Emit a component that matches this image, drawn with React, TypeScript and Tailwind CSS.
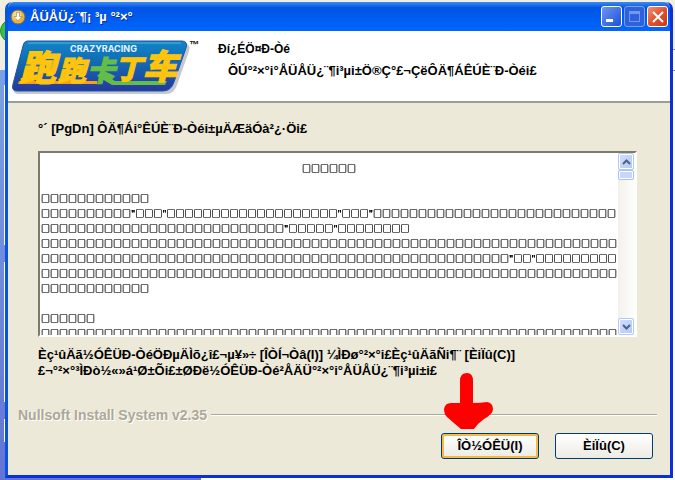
import React from "react";

const box = (count: number) => "□".repeat(count);

const licenseText = [
  "\u3000".repeat(29) + box(6),
  "",
  box(12),
  `${box(10)}"${box(3)}"${box(19)}"${box(3)}"${box(27)}`,
  `${box(27)}"${box(5)}"${box(8)}`,
  box(64),
  `${box(52)}"${box(2)}"${box(9)}`,
  box(64),
  box(12),
  "",
  box(6),
  box(64),
].join("\n");

function Backdrop() {
  return (
    <div className="absolute inset-0 -z-10 overflow-hidden bg-[#f0ede1]">
      <div className="absolute left-0 top-[19px] h-6 w-6 rounded-full border border-[#2b8a2b] bg-[#3cc03c]" />
      <div className="absolute bottom-0 left-0 top-[70px] w-[201px] bg-linear-to-b from-[#7d9fe4] to-[#6474d4]" />
      <div className="absolute left-1 top-[85px] h-[160px] w-px bg-white" />
      <div className="absolute left-1 top-[262px] h-[140px] w-px bg-white" />
      <div className="absolute left-1 top-[419px] h-[23px] w-px bg-white" />
      <div className="absolute bottom-0 left-[201px] right-0 top-[49px] border-t border-[#8c8c9c] bg-white" />
      <div className="absolute right-0 top-[70px] h-px w-2 bg-[#8c8c9c]" />
    </div>
  );
}

function Logo() {
  return (
    <svg viewBox="0 0 192 62" className="h-[62px] w-48 shrink-0" role="img" aria-label="跑跑卡丁车">
      <defs>
        <linearGradient id="plate" x1="0" y1="0" x2="0" y2="1">
          <stop offset="0" stopColor="#1186c6" />
          <stop offset="0.45" stopColor="#1268b3" />
          <stop offset="1" stopColor="#26379b" />
        </linearGradient>
      </defs>
      <path d="M17 5H174Q180 5 178 12L166 46Q163 55 155 55H7Q1 55 3 48L13 10Q14 5 19 5Z" fill="#c5c8cf" />
      <path d="M17 2H171Q177 2 175 9L163 43Q160 52 152 52H6Q0 52 2 45L12 7Q13 2 17 2Z" fill="url(#plate)" stroke="#1b579f" strokeWidth="1" />
      <path d="M17 4H170" stroke="#57b2df" strokeWidth="1" />
      <path d="M90 33L104 42H156L154 46H101L86 37Z" fill="#63bd46" />
      <path d="M8 42H86V45H7Z" fill="#ff9e14" />
      <text x="59" y="13" fill="#e6f5ff" fontFamily="Inter, sans-serif" fontSize="9" fontWeight="700">CRAZYRACING</text>
      <text y="42" fontFamily="'Noto Sans CJK SC', sans-serif" fontWeight="900" fontStyle="italic" fill="#ffc40b" stroke="#ffc40b" strokeWidth="1">
        <tspan x="9" fontSize="36">跑</tspan>
        <tspan x="47" fontSize="28">跑</tspan>
        <tspan x="76" fontSize="28" fill="#63bd46" stroke="#63bd46">卡</tspan>
        <tspan x="104" y="40" fontSize="27">丁</tspan>
        <tspan x="132" y="40" fontSize="34">车</tspan>
      </text>
      <text x="178" y="9" fill="#111111" fontFamily="'Liberation Sans', sans-serif" fontSize="10" fontWeight="700">™</text>
    </svg>
  );
}

function TitleBar() {
  return (
    <header className="flex h-[29px] items-center gap-[2px] rounded-t-[6px] bg-linear-to-b from-[#3a8bf3] via-[#0054e3] via-20% to-[#0166ff] px-[2px]">
      <svg viewBox="0 0 16 16" className="h-4 w-4 shrink-0" aria-hidden="true">
        <circle cx="8" cy="8" r="7" fill="#e7b545" stroke="#8b6d2d" />
        <circle cx="7" cy="6.5" r="4.5" fill="#f6d98b" />
        <path d="M6.5 3.5h3v4H12L8 12 4 7.500h2.500z" fill="#fff" stroke="#9a7a3a" strokeWidth="0.600" />
      </svg>
      <h1 className="ml-[2px] flex-1 whitespace-pre text-[13px] font-bold text-white [text-shadow:1px_1px_#0a2f8f]">ÅÜÅÜ¿¨¶¡ ³µ °²×°</h1>
      <button aria-label="Minimize" className="flex h-[21px] w-[21px] items-end rounded-[3px] border border-white bg-linear-to-br from-[#6d94f0] to-[#1c4fd8] pb-1 pl-1">
        <span className="h-[3px] w-[7px] bg-white" />
      </button>
      <button aria-label="Maximize" disabled className="flex h-[21px] w-[21px] items-center justify-center rounded-[3px] border border-[#7d9df0] bg-[#2c62df]">
        <span className="h-[11px] w-[11px] border border-t-[3px] border-[#7796ea]" />
      </button>
      <button aria-label="Close" className="flex h-[21px] w-[21px] items-center justify-center rounded-[3px] border border-white bg-linear-to-br from-[#f0906f] via-[#e2512d] to-[#c63a13]">
        <svg viewBox="0 0 12 12" className="h-3 w-3" aria-hidden="true">
          <path d="M1 1l10 10m0-10l-10 10" stroke="#fff" strokeWidth="2" />
        </svg>
      </button>
    </header>
  );
}

function ScrollBar() {
  const arrow = "flex h-[17px] w-4 items-center justify-center rounded-[2px] border border-[#b4c8f6] bg-linear-to-br from-[#d2defc] to-[#b3c8f8] shadow-[inset_0_0_0_1px_#ffffff]";
  return (
    <div className="flex w-[17px] shrink-0 flex-col bg-linear-to-r from-[#f3f1ec] to-[#fefefb]">
      <button aria-label="Scroll up" className={arrow}>
        <svg viewBox="0 0 9 6" className="h-[6px] w-[9px]" aria-hidden="true"><path d="M1 5l3.500-3.500L8 5" fill="none" stroke="#4d6185" strokeWidth="2" /></svg>
      </button>
      <div className="h-[10px] w-4 rounded-[2px] border border-[#a9c0f2] bg-[#c8d6fb] shadow-[inset_0_0_0_1px_#ffffff]" />
      <div className="flex-1" />
      <button aria-label="Scroll down" className={arrow}>
        <svg viewBox="0 0 9 6" className="h-[6px] w-[9px]" aria-hidden="true"><path d="M1 1l3.500 3.500L8 1" fill="none" stroke="#4d6185" strokeWidth="2" /></svg>
      </button>
    </div>
  );
}

function PointerArrow() {
  return (
    <svg viewBox="0 0 50 58" className="pointer-events-none absolute -top-[61px] left-[3px] h-[58px] w-[50px]" aria-hidden="true">
      <path d="M16 9Q16 1 23 1Q29 1 29 9V31Q37 31 43 30Q49 31 49 37Q49 42 40 47L34 52L30 57H17L11 52L3 45Q0 42 0 37Q1 31 7 31H16Z" fill="#ff0000" />
    </svg>
  );
}

export default function App() {
  return (
    <div className="relative isolate min-h-screen pb-[2px] pl-[5px] pr-[2px] pt-[2px] font-['Liberation_Sans',Arial,sans-serif] text-black">
      <Backdrop />
      <main className="flex min-h-[476px] flex-col rounded-t-[7px] border-x-[3px] border-b-[3px] border-[#0831d9] border-l-[#0855dd] bg-[#ece9d8]">
        <TitleBar />
        <section className="flex h-[72px] border-b-2 border-b-[#9d9d95] bg-white pl-[3px] pt-2">
          <Logo />
          <div className="flex-1 pl-[15px] pt-[2px] whitespace-nowrap">
            <h2 className="text-[12px] font-bold leading-4">Ðí¿ÉÖ¤Ð-Òé</h2>
            <p className="mt-[6px] pl-[10px] text-[13px] font-bold leading-4">ÔÚ°²×°i°ÅÜÅÜ¿¨¶i³µi±Ö®Ç°£¬ÇëÔÄ¶ÁÊÚÈ¨Ð-Òéi£</p>
          </div>
        </section>
        <section className="flex flex-col pl-[30px] pr-[33px] pt-[18px]">
          <label htmlFor="license" className="whitespace-nowrap text-[13px] font-bold leading-4">°´ [PgDn] ÔÄ¶Ái°ÊÚÈ¨Ð-Òéi±µÄÆäÓà²¿·Öi£</label>
          <div className="mt-[14px] flex h-[186px] border-2 border-b-white border-l-[#7d7a70] border-r-white border-t-[#7d7a70] bg-white">
            <textarea id="license" readOnly wrap="off" value={licenseText} className="min-w-0 flex-1 resize-none overflow-hidden whitespace-pre bg-transparent pl-[1px] pt-2 font-['Noto_Sans_CJK_SC',sans-serif] text-[9px] leading-[15px] text-black outline-none will-change-transform [text-shadow:0_0_#000000,0_0_#000000]" />
            <ScrollBar />
          </div>
          <p className="mt-[10px] whitespace-nowrap text-[13px] font-bold leading-4">
            Èç¹ûÄã½ÓÊÜÐ-ÒéÖÐµÄÌõ¿î£¬µ¥»÷ [ÎÒÍ¬Òâ(I)] ¼ÌÐø°²×°i£Èç¹ûÄãÑi¶¨ [ÈiÏû(C)]
            <br />
            £¬°²×°³ÌÐò½«»á¹Ø±Õi£±ØÐë½ÓÊÜÐ-Òé²ÅÄÜ°²×°i°ÅÜÅÜ¿¨¶i³µi±i£
          </p>
        </section>
        <footer className="px-[10px] pt-7">
          <div className="flex items-center gap-1 pr-[3px]">
            <span className="text-[14px] font-bold leading-4 text-[#aca899] [text-shadow:1px_1px_#ffffff]">Nullsoft Install System v2.35</span>
            <span className="h-[2px] flex-1 border-b border-t border-b-white border-t-[#aca899]" />
          </div>
          <div className="flex justify-end gap-4 pr-[7px] pt-[10px]">
            <div className="relative">
              <PointerArrow />
              <button className="h-[26px] w-[98px] rounded-[3px] border border-[#003c74] bg-linear-to-b from-white to-[#ecebe5] text-[13px] font-bold shadow-[inset_0_0_0_2px_#f5b944]">ÎÒ½ÓÊÜ(I)</button>
            </div>
            <button className="h-[26px] w-[98px] rounded-[3px] border border-[#003c74] bg-linear-to-b from-white to-[#ecebe5] text-[13px] font-bold">ÈiÏû(C)</button>
          </div>
        </footer>
      </main>
    </div>
  );
}
